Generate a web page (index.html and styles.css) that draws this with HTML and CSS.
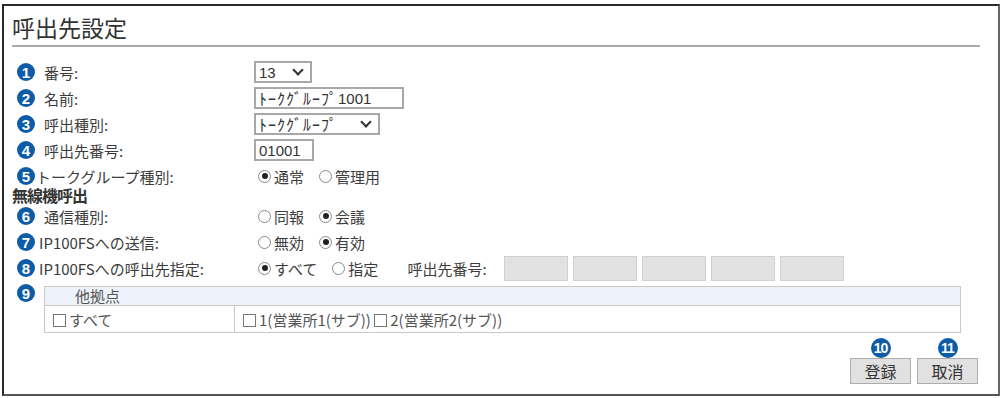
FILE: index.html
```html
<!DOCTYPE html>
<html lang="ja">
<head>
    <meta charset="UTF-8">
    <title>呼出先設定</title>
    <link rel="stylesheet" href="styles.css">
</head>
<body>
  <div class="frame">
    <h1 class="title">呼出先設定</h1>

    <div class="row first">
      <span class="badge">1</span><span class="label">番号:</span>
      <span class="sel w58">13<i class="chev"></i></span>
    </div>
    <div class="row">
      <span class="badge">2</span><span class="label">名前:</span>
      <span class="txt w150"><span class="kana">ﾄｰｸｸﾞﾙｰﾌﾟ</span>1001</span>
    </div>
    <div class="row">
      <span class="badge">3</span><span class="label">呼出種別:</span>
      <span class="sel w125"><span class="kana">ﾄｰｸｸﾞﾙｰﾌﾟ</span><i class="chev"></i></span>
    </div>
    <div class="row">
      <span class="badge">4</span><span class="label">呼出先番号:</span>
      <span class="txt w60">01001</span>
    </div>
    <div class="row">
      <span class="badge">5</span><span class="label tight">トークグループ種別:</span>
      <span class="radio on"></span><span class="opt">通常</span>
      <span class="radio"></span><span class="opt">管理用</span>
    </div>

    <div class="section">無線機呼出</div>

    <div class="row">
      <span class="badge">6</span><span class="label">通信種別:</span>
      <span class="radio"></span><span class="opt">同報</span>
      <span class="radio on"></span><span class="opt">会議</span>
    </div>
    <div class="row">
      <span class="badge">7</span><span class="label ip">IP100FSへの送信:</span>
      <span class="radio"></span><span class="opt">無効</span>
      <span class="radio on"></span><span class="opt">有効</span>
    </div>
    <div class="row">
      <span class="badge">8</span><span class="label ip">IP100FSへの呼出先指定:</span>
      <span class="radio on"></span><span class="opt">すべて</span>
      <span class="radio"></span><span class="opt">指定</span>
      <span class="dest">呼出先番号:</span>
      <span class="gray"></span><span class="gray"></span><span class="gray"></span><span class="gray"></span><span class="gray"></span>
    </div>

    <div class="sites">
      <span class="badge">9</span>
      <table class="tbl">
        <tr><th colspan="2">他拠点</th></tr>
        <tr>
          <td class="c1"><span class="chk"></span>すべて</td>
          <td><span class="chk"></span>1(営業所1(サブ)) <span class="chk"></span>2(営業所2(サブ))</td>
        </tr>
      </table>
    </div>

    <div class="actions">
      <div class="act">
        <span class="badge">10</span>
        <button class="btn">登録</button>
      </div>
      <div class="act">
        <span class="badge">11</span>
        <button class="btn">取消</button>
      </div>
    </div>
  </div>
</body>
</html>
```

FILE: styles.css
```css
body{
    margin: 0;
    background: #fff;
    font-family: "Noto Sans CJK JP", "Liberation Sans", sans-serif;
    color: #3c3c3c;
}

.frame{
    margin: 4px 4px 2px 2px;
    height: 388px;
    border: 2px solid #2a2a2a;
    border-right-color: #666;
    border-bottom-color: #555;
}

.title{
    margin: 0 18px 0 8px;
    padding: 8px 0 5px 0;
    font-size: 23px;
    font-weight: normal;
    line-height: 26px;
    color: #333;
    border-bottom: 2px solid #aaa;
}

.row{
    display: flex;
    align-items: center;
    height: 26px;
    font-size: 15px;
}
.row.first{
    margin-top: 12px;
}

.badge{
    display: inline-flex;
    align-items: center;
    justify-content: center;
    width: 18px;
    height: 18px;
    border-radius: 50%;
    background: #0e5ca8;
    color: #fff;
    font-family: "Liberation Sans", sans-serif;
    font-size: 15px;
    font-weight: bold;
    flex: none;
}
.row .badge{
    margin-left: 13px;
}
.label{
    width: 210px;
    margin-left: 9px;
}
.label.tight{
    margin-left: 1px;
    width: 218px;
}
.label.ip{
    margin-left: 4px;
    width: 215px;
}

.sel, .txt{
    display: inline-flex;
    align-items: center;
    border: 2px solid #a8a8a8;
    padding: 0 3px;
    box-sizing: border-box;
    height: 22px;
    font-size: 15px;
    color: #333;
    font-family: "Liberation Sans", "Noto Sans CJK JP", sans-serif;
}
.sel{
    justify-content: space-between;
}
.kana{
    font-family: "Noto Sans CJK JP", sans-serif;
    font-size: 16px;
    letter-spacing: 1px;
}
.w58{ width: 58px; }
.w60{ width: 60px; }
.w125{ width: 126px; }
.w150{ width: 150px; }

.chev{
    width: 6px;
    height: 6px;
    border-right: 2px solid #333;
    border-bottom: 2px solid #333;
    transform: rotate(45deg);
    margin: -4px 5px 0 0;
}

.radio{
    width: 13px;
    height: 13px;
    border: 1px solid #8a8a8a;
    border-radius: 50%;
    box-sizing: border-box;
    margin-left: 4px;
    position: relative;
    flex: none;
}
.radio.on::after{
    content: "";
    position: absolute;
    left: 2.5px;
    top: 2.5px;
    width: 6px;
    height: 6px;
    border-radius: 50%;
    background: #222;
}
.opt{
    margin-left: 3px;
    margin-right: 11px;
}
.dest{
    margin-left: 18px;
    margin-right: 17px;
}

.gray{
    width: 64px;
    height: 25px;
    background: #e2e2e2;
    border: 1px solid #d0d0d0;
    box-sizing: border-box;
    margin-right: 5px;
    flex: none;
}

.section{
    font-size: 16px;
    font-weight: bold;
    color: #333;
    margin: 0 0 1px 8px;
    line-height: 13px;
    letter-spacing: -1px;
}

.sites{
    display: flex;
    align-items: flex-start;
    margin-top: 5px;
}
.sites .badge{
    margin-left: 13px;
    margin-top: -2px;
}
.tbl{
    margin-left: 9px;
    width: 917px;
    border-collapse: collapse;
    font-size: 15px;
}
.tbl th{
    background: #eef2fa;
    border: 1px solid #c8c8c8;
    text-align: left;
    font-weight: normal;
    padding: 0 0 0 30px;
    height: 18px;
    line-height: 16px;
    color: #555;
}
.tbl td{
    border: 1px solid #c8c8c8;
    height: 26px;
    padding: 0 8px;
    color: #555;
}
.tbl .c1{
    width: 173px;
}
.chk{
    display: inline-block;
    width: 13px;
    height: 13px;
    border: 1px solid #777;
    box-sizing: border-box;
    vertical-align: -1px;
    margin-right: 3px;
}

.actions{
    display: flex;
    justify-content: flex-end;
    gap: 6px;
    margin: 5px 20px 0 0;
}
.act{
    display: flex;
    flex-direction: column;
    align-items: center;
}
.act .badge{
    width: 20px;
    height: 20px;
    font-size: 14px;
    letter-spacing: -1px;
    margin-bottom: 0;
}
.btn{
    width: 61px;
    height: 26px;
    background: #e1e1e1;
    border: 1px solid #adadad;
    font-family: "Noto Sans CJK JP", sans-serif;
    font-size: 16px;
    color: #333;
    padding: 0;
}
```
